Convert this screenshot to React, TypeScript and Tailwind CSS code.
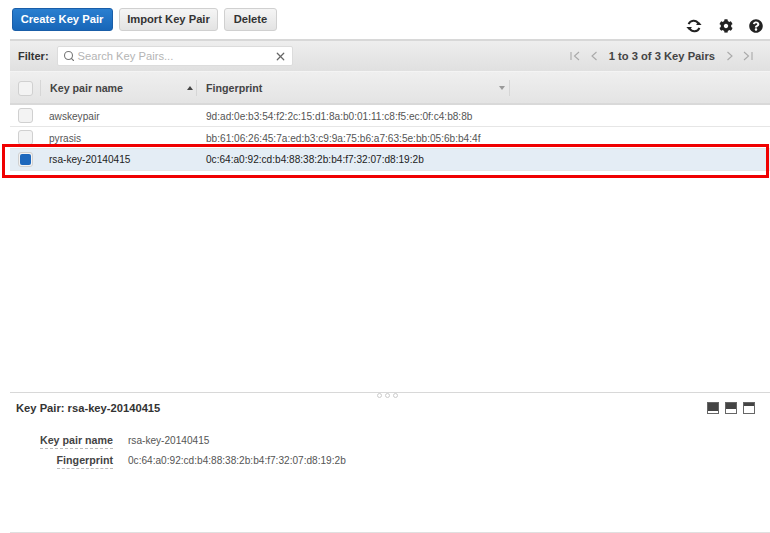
import { Search, X } from 'lucide-react';
import { FaCog, FaQuestionCircle } from 'react-icons/fa';

const rows = [
  { name: 'awskeypair', fingerprint: '9d:ad:0e:b3:54:f2:2c:15:d1:8a:b0:01:11:c8:f5:ec:0f:c4:b8:8b' },
  { name: 'pyrasis', fingerprint: 'bb:61:06:26:45:7a:ed:b3:c9:9a:75:b6:a7:63:5e:bb:05:6b:b4:4f' },
  { name: 'rsa-key-20140415', fingerprint: '0c:64:a0:92:cd:b4:88:38:2b:b4:f7:32:07:d8:19:2b', selected: true },
];

function PagerIcon({ d }: { d: string }) {
  return (
    <svg width="12" height="12" viewBox="0 0 12 12" fill="none" stroke="#a9a9a9" strokeWidth="1.1">
      <path d={d} />
    </svg>
  );
}

function RefreshIcon() {
  return (
    <svg width="16" height="14" viewBox="0 0 16 14" fill="none" className="text-[#222] mr-px">
      <path d="M2.6 5.2A5.4 5.4 0 0 1 12.3 4.4" stroke="currentColor" strokeWidth="2" />
      <path d="M10 6h5.6l-2.8-3.2z" fill="currentColor" />
      <path d="M13.4 8.8A5.4 5.4 0 0 1 3.7 9.6" stroke="currentColor" strokeWidth="2" />
      <path d="M6 8H.4l2.8 3.2z" fill="currentColor" />
    </svg>
  );
}

function Checkbox({ checked }: { checked?: boolean }) {
  return (
    <div className="w-[15px] h-[15px] rounded-[3px] border border-[#d0d0d0] bg-[#f3f3f3] flex items-center justify-center">
      {checked && <div className="w-[11px] h-[11px] rounded-[2px] bg-[#1d68bd]" />}
    </div>
  );
}

function PaneIcon({ fill }: { fill: string }) {
  return (
    <div className="w-[12px] h-[12px] bg-[#444] border border-[#666] flex flex-col justify-end">
      <div className={`bg-white ${fill}`} />
    </div>
  );
}

export default function App() {
  return (
    <div className="relative w-[770px] h-[533px] bg-white overflow-hidden text-[10.1px] text-[#444] font-['Liberation_Sans',Arial,sans-serif]">
      {/* Toolbar */}
      <div className="h-[39px] flex pl-3 pt-2 pr-[7px]">
        <div className="flex gap-[6px] h-[23px] text-[11.2px] font-bold">
          <button className="w-[101px] pr-px rounded-[3px] border border-[#1a5ea8] bg-gradient-to-b from-[#2a7fd0] to-[#1766b8] text-white">
            Create Key Pair
          </button>
          <button className="w-[99px] rounded-[3px] border border-[#d0d0d0] bg-gradient-to-b from-[#f5f5f5] to-[#e3e3e3] text-[#333]">
            Import Key Pair
          </button>
          <button className="w-[53px] rounded-[3px] border border-[#d0d0d0] bg-gradient-to-b from-[#f5f5f5] to-[#e3e3e3] text-[#333]">
            Delete
          </button>
        </div>
        <div className="ml-auto mt-[11px] flex items-center gap-[16px] h-[14px] text-[#222]">
          <RefreshIcon />
          <FaCog size={14} />
          <FaQuestionCircle size={14} />
        </div>
      </div>

      <div className="ml-[10px]">
        {/* Filter bar */}
        <div className="h-[33px] flex items-center pl-2 pr-4 bg-gradient-to-b from-[#eeeeee] to-[#e0e0e0] border-t-2 border-[#d8d8d8] border-b border-b-[#f4f4f4]">
          <span className="text-[11px] font-bold text-[#333]">Filter:</span>
          <div className="ml-[8px] w-[236px] h-[20px] rounded-[2px] border border-[#dcdcdc] bg-white flex items-center pl-[5px] pr-[5px]">
            <Search size={12} className="text-[#777]" strokeWidth={2.2} />
            <span className="ml-[3px] text-[11.2px] text-[#b4b4b4]">Search Key Pairs...</span>
            <X size={13} className="ml-auto text-[#666]" strokeWidth={2.2} />
          </div>
          <div className="ml-auto flex items-center text-[11.2px] font-bold text-[#444]">
            <PagerIcon d="M2 2v8M10 2 5.5 6l4.5 4" />
            <span className="w-[7px]" />
            <PagerIcon d="M8.5 2 4 6l4.5 4" />
            <span className="ml-[9px] mr-[9px]">1 to 3 of 3 Key Pairs</span>
            <PagerIcon d="M3.5 2 8 6l-4.5 4" />
            <span className="w-[6px]" />
            <PagerIcon d="M2 2l4.5 4L2 10M10 2v8" />
          </div>
        </div>

        {/* Table header */}
        <div className="h-[33px] flex items-center pt-px bg-gradient-to-b from-[#efefef] to-[#e4e4e4] border-b-2 border-[#d9d9d9] text-[10.7px] font-bold text-[#444]">
          <div className="w-[31px] pl-2 flex items-center h-[16px] border-r border-[#d6d6d6]">
            <Checkbox />
          </div>
          <div className="w-[156px] pl-[9px] pr-[3px] flex items-center justify-between h-[16px] border-r border-[#d6d6d6]">
            <span>Key pair name</span>
            <span className="w-0 h-0 border-x-[3px] border-x-transparent border-b-[4px] border-b-[#444]" />
          </div>
          <div className="w-[313px] pl-[9px] pr-[4px] flex items-center justify-between h-[16px] border-r border-[#d6d6d6]">
            <span>Fingerprint</span>
            <span className="w-0 h-0 border-x-[3px] border-x-transparent border-t-[4px] border-t-[#999]" />
          </div>
        </div>

        {/* Rows */}
        {rows.map((row) => (
          <div
            key={row.name}
            className={`h-[22px] flex items-center border-b border-[#e6e6e6] ${row.selected ? 'bg-[#e4edf5] text-[#222]' : 'text-[#555]'}`}
          >
            <div className="w-[39px] pl-2">
              <Checkbox checked={row.selected} />
            </div>
            <div className={`w-[157px] ${row.selected ? '' : 'pt-[2px]'}`}>{row.name}</div>
            <div className={row.selected ? '' : 'pt-[2px]'}>{row.fingerprint}</div>
          </div>
        ))}
      </div>

      {/* Selected row highlight */}
      <div className="absolute left-[2px] top-[144px] w-[767px] h-[34px] border-[3px] border-[#f00000]" />

      {/* Detail pane */}
      <div className="absolute left-[10px] right-0 top-[392px] bottom-0 border-t border-t-[#d8d8d8] border-b border-b-[#e0e0e0]">
        <div className="absolute right-[372px] top-0 flex gap-[3px]">
          <span className="w-[5px] h-[5px] rounded-full border border-[#ccc]" />
          <span className="w-[5px] h-[5px] rounded-full border border-[#ccc]" />
          <span className="w-[5px] h-[5px] rounded-full border border-[#ccc]" />
        </div>
        <div className="flex items-center justify-between pl-[6px] pr-[15px] pt-[9px]">
          <span className="text-[11.2px] font-bold text-[#333] -mt-[2px]">Key Pair: rsa-key-20140415</span>
          <div className="flex gap-[6px] -mt-[2px]">
            <PaneIcon fill="h-[2px]" />
            <PaneIcon fill="h-[4px]" />
            <PaneIcon fill="h-[7px]" />
          </div>
        </div>
        <div className="mt-[16px] flex flex-col gap-[5px]">
          <div className="flex items-center h-[15px]">
            <div className="w-[103px] flex justify-end">
              <span className="text-[10.7px] font-bold text-[#444] border-b border-dashed border-[#bbb]">Key pair name</span>
            </div>
            <span className="ml-[15px] text-[#555]">rsa-key-20140415</span>
          </div>
          <div className="flex items-center h-[15px]">
            <div className="w-[103px] flex justify-end">
              <span className="text-[10.7px] font-bold text-[#444] border-b border-dashed border-[#bbb]">Fingerprint</span>
            </div>
            <span className="ml-[15px] text-[#555]">0c:64:a0:92:cd:b4:88:38:2b:b4:f7:32:07:d8:19:2b</span>
          </div>
        </div>
      </div>
    </div>
  );
}
